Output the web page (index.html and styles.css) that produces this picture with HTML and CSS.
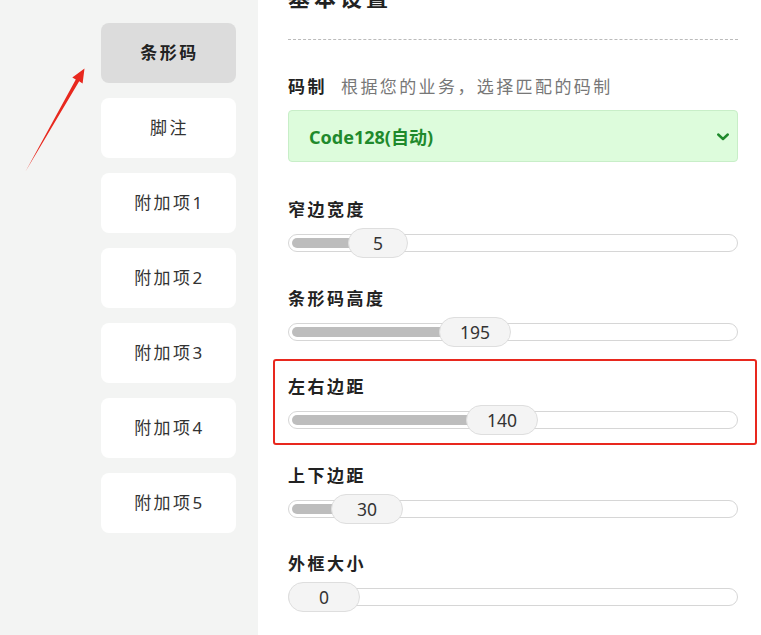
FILE: index.html
```html
<!DOCTYPE html>
<html lang="zh-CN">
<head>
  <meta charset="UTF-8">
  <title>条形码设置</title>
  <link rel="stylesheet" href="styles.css">
</head>
<body>
  <div class="layout">
    <aside class="sidebar">
      <svg class="arrow" width="100" height="180" viewBox="0 0 100 180">
        <polygon points="84.5,68.5 72.3,77.4 75.8,79.4 25.5,171.5 79.2,81.3 82.6,83.4" fill="#e8281e"/>
      </svg>
      <nav class="tabs">
        <button class="tab active">条形码</button>
        <button class="tab">脚注</button>
        <button class="tab">附加项1</button>
        <button class="tab">附加项2</button>
        <button class="tab">附加项3</button>
        <button class="tab">附加项4</button>
        <button class="tab">附加项5</button>
      </nav>
    </aside>

    <main class="panel">
      <h2 class="panel-title">基本设置</h2>

      <div class="field">
        <div class="field-label">码制<span class="hint">根据您的业务，选择匹配的码制</span></div>
        <div class="select">
          <span>Code128(自动)</span>
          <svg class="chevron" width="12" height="8" viewBox="0 0 12 8">
            <polyline points="1.2,1.5 6,6 10.8,1.5" fill="none" stroke="#1f8a2c" stroke-width="2.4" stroke-linecap="round" stroke-linejoin="round"/>
          </svg>
        </div>
      </div>

      <div class="field slider-field">
        <div class="field-label">窄边宽度</div>
        <div class="slider">
          <div class="track">
            <div class="fill" style="width: 80px"></div>
            <div class="thumb narrow" style="left: 59px">5</div>
          </div>
        </div>
      </div>

      <div class="field slider-field">
        <div class="field-label">条形码高度</div>
        <div class="slider">
          <div class="track">
            <div class="fill" style="width: 180px"></div>
            <div class="thumb" style="left: 150px">195</div>
          </div>
        </div>
      </div>

      <div class="field slider-field highlighted">
        <div class="field-label">左右边距</div>
        <div class="slider">
          <div class="track">
            <div class="fill" style="width: 205px"></div>
            <div class="thumb" style="left: 177px">140</div>
          </div>
        </div>
      </div>

      <div class="field slider-field">
        <div class="field-label">上下边距</div>
        <div class="slider">
          <div class="track">
            <div class="fill" style="width: 70px"></div>
            <div class="thumb" style="left: 42px">30</div>
          </div>
        </div>
      </div>

      <div class="field slider-field">
        <div class="field-label">外框大小</div>
        <div class="slider">
          <div class="track">
            <div class="thumb" style="left: -1px">0</div>
          </div>
        </div>
      </div>
    </main>
  </div>
</body>
</html>
```

FILE: styles.css
```css
:root {
  --side-bg: #f3f4f3;
  --text: #222;
  --muted: #777;
  --green: #1f8a2c;
  --green-bg: #ddfcdc;
  --green-border: #c8eec8;
  --track-border: #d6d6d6;
  --fill: #bdbdbd;
  --alert: #e8281e;
}

html, body {
  margin: 0;
  height: 100%;
  overflow: hidden;
}

body {
  font-family: "Noto Sans", "Noto Sans CJK SC", sans-serif;
  color: var(--text);
  background-color: #fff;
}

.layout {
  display: flex;
  height: 100%;
}

.sidebar {
  position: relative;
  width: 258px;
  flex-shrink: 0;
  background-color: var(--side-bg);
  padding: 23px 22px 0 0;
  box-sizing: border-box;
}

.arrow {
  position: absolute;
  left: 0;
  top: 0;
}

.tabs {
  display: flex;
  flex-direction: column;
  align-items: flex-end;
  gap: 15px;
}

.tab {
  width: 135px;
  height: 60px;
  border: none;
  border-radius: 8px;
  background-color: #fff;
  font-family: inherit;
  font-size: 17px;
  line-height: 24px;
  letter-spacing: 2.5px;
  color: #333;
  padding: 0 0 1px 2px;
  cursor: pointer;
}

.tab.active {
  background-color: #dcdcdc;
  font-weight: 700;
  color: var(--text);
}

.panel {
  flex: 1;
  padding: 0 23px 0 30px;
}

.panel-title {
  margin: -18px 0 0;
  font-size: 22px;
  line-height: 30px;
  letter-spacing: 4px;
  padding-bottom: 27px;
  border-bottom: 1px dashed #bbb;
}

.field {
  margin-top: 35px;
}

.slider-field {
  position: relative;
  margin-top: 28.5px;
}

.field:nth-child(3) {
  margin-top: 36px;
}

.field-label {
  font-size: 17px;
  line-height: 24px;
  font-weight: 700;
  letter-spacing: 2.5px;
}

.hint {
  font-weight: 400;
  color: var(--muted);
  margin-left: 14px;
  letter-spacing: 2.4px;
}

.select {
  margin-top: 11px;
  height: 52px;
  box-sizing: border-box;
  display: flex;
  align-items: center;
  justify-content: space-between;
  padding: 0 8px 0 20px;
  background-color: var(--green-bg);
  border: 1px solid var(--green-border);
  border-radius: 4px;
  color: var(--green);
  font-size: 18px;
  font-weight: 700;
}

.chevron {
  margin-top: 1px;
}

.slider {
  margin-top: 6px;
  height: 30px;
  display: flex;
  align-items: center;
}

.track {
  position: relative;
  flex: 1;
  height: 18px;
  box-sizing: border-box;
  padding: 3px;
  border: 1px solid var(--track-border);
  border-radius: 9px;
  background-color: #fff;
}

.fill {
  height: 10px;
  border-radius: 5px;
  background-color: var(--fill);
}

.thumb {
  position: absolute;
  top: -7px;
  width: 72px;
  height: 30px;
  box-sizing: border-box;
  border: 1px solid #dedede;
  border-radius: 15px;
  background-color: #f4f4f4;
  text-align: center;
  font-size: 17.5px;
  line-height: 28px;
  color: #333;
}

.thumb.narrow {
  width: 60px;
}

.highlighted::after {
  content: "";
  position: absolute;
  top: -16px;
  left: -15px;
  right: -19px;
  bottom: -10px;
  border: 2px solid var(--alert);
  border-radius: 3px;
  pointer-events: none;
}
```
